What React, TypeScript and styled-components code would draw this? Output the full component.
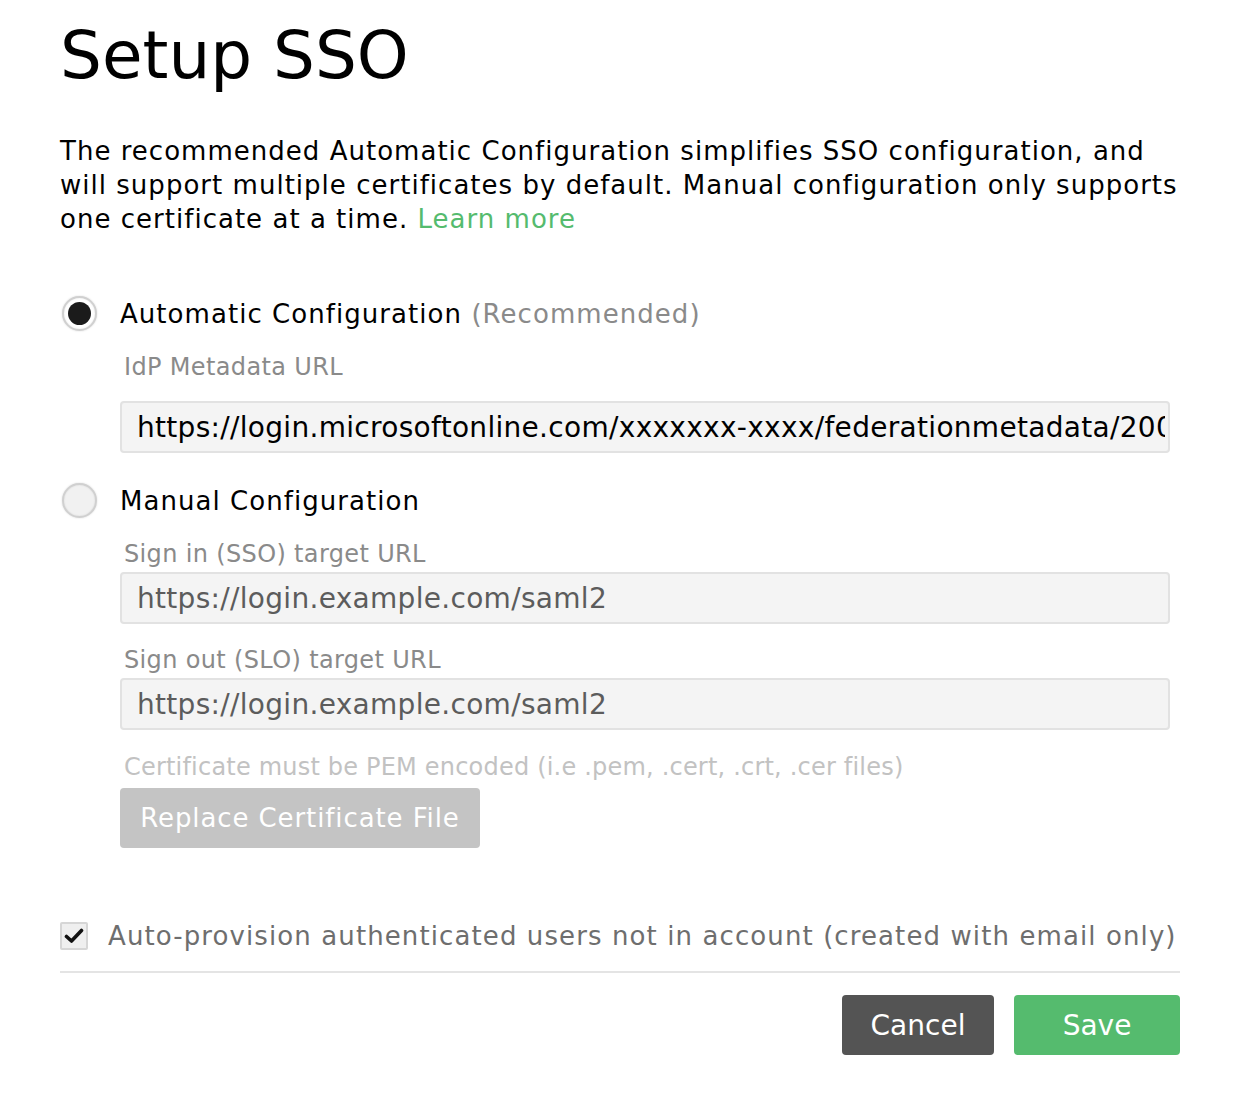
import React, { useState } from "react";
import styled, { createGlobalStyle } from "styled-components";

const GlobalStyle = createGlobalStyle`
  body {
    margin: 0;
    background: #fff;
    font-family: "DejaVu Sans", Verdana, sans-serif;
    color: #000;
  }
`;

const colors = {
  green: "#55bb6e",
  label: "#8a8a8a",
  hint: "#c2c2c2",
  inputBg: "#f4f4f4",
  inputBorder: "#e2e2e2",
};

export default function App() {
  const [mode, setMode] = useState("auto");
  const [autoProvision, setAutoProvision] = useState(true);

  return (
    <Page>
      <GlobalStyle />
      <Title>Setup SSO</Title>
      <Intro>
        The recommended Automatic Configuration simplifies SSO configuration, and
        <br />
        will support multiple certificates by default. Manual configuration only supports
        <br />
        one certificate at a time. <Link href="#">Learn more</Link>
      </Intro>

      <Option>
        <RadioRow onClick={() => setMode("auto")}>
          <Radio checked={mode === "auto"} />
          <span>
            Automatic Configuration <Muted>(Recommended)</Muted>
          </span>
        </RadioRow>
        <Fields>
          <FieldLabel $gap={22}>IdP Metadata URL</FieldLabel>
          <Input
            $filled
            readOnly
            value="https://login.microsoftonline.com/xxxxxxx-xxxx/federationmetadata/2007-06/federationmetadata.xml"
          />
        </Fields>
      </Option>

      <Option>
        <RadioRow onClick={() => setMode("manual")}>
          <Radio checked={mode === "manual"} />
          <span>Manual Configuration</span>
        </RadioRow>
        <Fields>
          <FieldLabel $gap={22}>Sign in (SSO) target URL</FieldLabel>
          <Input readOnly value="https://login.example.com/saml2" />
          <FieldLabel $gap={22}>Sign out (SLO) target URL</FieldLabel>
          <Input readOnly value="https://login.example.com/saml2" />
          <Hint>Certificate must be PEM encoded (i.e .pem, .cert, .crt, .cer files)</Hint>
          <UploadButton disabled>Replace Certificate File</UploadButton>
        </Fields>
      </Option>

      <CheckRow onClick={() => setAutoProvision(!autoProvision)}>
        <Checkbox>
          {autoProvision && (
            <svg width="20" height="18" viewBox="0 0 20 18">
              <path
                d="M2.5 9.5 L7.5 14 L17.5 3.5"
                fill="none"
                stroke="#111"
                strokeWidth="3.6"
                strokeLinecap="round"
                strokeLinejoin="round"
              />
            </svg>
          )}
        </Checkbox>
        Auto-provision authenticated users not in account (created with email only)
      </CheckRow>

      <Footer>
        <ActionButton $variant="cancel">Cancel</ActionButton>
        <ActionButton $variant="save">Save</ActionButton>
      </Footer>
    </Page>
  );
}

const Page = styled.div`
  width: 1120px;
  padding: 18px 56px 40px 60px;
`;

const Title = styled.h1`
  margin: 0;
  font-size: 66px;
  font-weight: 400;
  line-height: 76px;
`;

const Intro = styled.p`
  margin: 40px 0 0;
  font-size: 26px;
  line-height: 34px;
  letter-spacing: 1.02px;
  white-space: nowrap;
`;

const Link = styled.a`
  color: ${colors.green};
  text-decoration: none;
`;

const Option = styled.div`
  margin-top: 60px;

  & + & {
    margin-top: 30px;
  }
`;

const RadioRow = styled.label`
  display: flex;
  align-items: center;
  gap: 23px;
  font-size: 26px;
  line-height: 34px;
  letter-spacing: 1.05px;
  cursor: pointer;
`;

const Muted = styled.span`
  color: ${colors.label};
`;

const Radio = styled.span<{ checked?: boolean }>`
  flex: none;
  position: relative;
  width: 35px;
  height: 35px;
  margin-left: 2px;
  box-sizing: border-box;
  border-radius: 50%;
  border: 2px solid #d0d0d0;
  background: ${(p) => (p.checked ? "#fff" : "#f1f1f1")};
  box-shadow: 0 0 2px rgba(0, 0, 0, 0.15), inset 0 0 2px rgba(0, 0, 0, 0.1);

  &::after {
    content: "";
    display: ${(p) => (p.checked ? "block" : "none")};
    position: absolute;
    inset: 4px;
    border-radius: 50%;
    background: #1b1b1b;
  }
`;

const Fields = styled.div`
  display: flex;
  flex-direction: column;
  padding-left: 60px;
`;

const FieldLabel = styled.div<{ $gap?: number }>`
  margin: ${(p) => p.$gap ?? 18}px 0 4px 4px;
  font-size: 24px;
  line-height: 28px;
  color: ${colors.label};
  letter-spacing: 0.35px;
`;

const Input = styled.input<{ $filled?: boolean }>`
  box-sizing: border-box;
  width: 1050px;
  height: 52px;
  padding: 0 3px 0 15px;
  margin-top: ${(p) => (p.$filled ? 16 : 0)}px;
  border: 2px solid ${colors.inputBorder};
  border-radius: 4px;
  background: ${colors.inputBg};
  font-family: "DejaVu Sans", Verdana, sans-serif;
  font-size: 28px;
  letter-spacing: 0.3px;
  color: ${(p) => (p.$filled ? "#000" : "#5c5c5c")};
  outline: none;
`;

const Hint = styled.div`
  margin: 23px 0 7px 4px;
  font-size: 24px;
  line-height: 28px;
  color: ${colors.hint};
  letter-spacing: 0.2px;
`;

const UploadButton = styled.button`
  align-self: flex-start;
  width: 360px;
  height: 60px;
  border: none;
  border-radius: 4px;
  background: #c4c4c4;
  color: #fff;
  font-family: "DejaVu Sans", Verdana, sans-serif;
  font-size: 26px;
  letter-spacing: 0.9px;
`;

const CheckRow = styled.label`
  display: flex;
  align-items: center;
  gap: 20px;
  margin-top: 71px;
  padding-bottom: 18px;
  border-bottom: 2px solid #e4e4e4;
  font-size: 26px;
  line-height: 34px;
  color: #6e6e6e;
  letter-spacing: 1.1px;
  white-space: nowrap;
  cursor: pointer;
`;

const Checkbox = styled.span`
  flex: none;
  display: flex;
  align-items: center;
  justify-content: center;
  width: 28px;
  height: 28px;
  box-sizing: border-box;
  border: 2px solid #d6d6d6;
  border-radius: 2px;
  background: #efefef;
`;

const Footer = styled.div`
  display: flex;
  justify-content: flex-end;
  gap: 20px;
  margin-top: 22px;
`;

const ActionButton = styled.button<{ $variant: "cancel" | "save" }>`
  height: 60px;
  width: ${(p) => (p.$variant === "save" ? 166 : 152)}px;
  border: none;
  border-radius: 4px;
  background: ${(p) => (p.$variant === "save" ? colors.green : "#545454")};
  color: #fff;
  font-family: "DejaVu Sans", Verdana, sans-serif;
  font-size: 28px;
  cursor: pointer;
`;
